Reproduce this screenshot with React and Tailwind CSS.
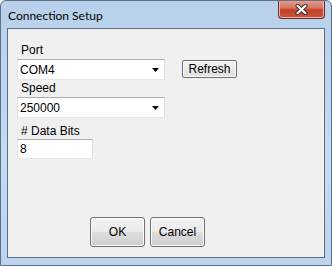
import React from 'react';

const ComboBox = ({ value }) => (
  <div className="relative w-[148px] h-[21px] bg-white border border-[#abadb3] border-b-[#e3e9ef] border-l-[#e2e3ea] border-r-[#dbdfe6] flex items-center pl-[2px]">
    <span className="text-[12px] leading-none text-black">{value}</span>
    <svg className="absolute right-[4px] top-[8px]" width="8" height="4" viewBox="0 0 8 4">
      <path d="M0 0 H7 L3.5 4 Z" fill="#000" />
    </svg>
  </div>
);

const Label = ({ children, className = '' }) => (
  <div className={`h-[15px] pl-[4px] text-[12px] leading-[15px] text-black ${className}`}>{children}</div>
);

const DialogButton = ({ children }) => (
  <button className="w-[55px] h-[30px] rounded-[3px] border border-[#707070] p-0 bg-[linear-gradient(to_bottom,#f2f2f2_0%,#ebebeb_50%,#dddddd_50%,#cfcfcf_100%)] shadow-[inset_0_0_0_1px_#fcfcfc] text-[12px] text-black">
    {children}
  </button>
);

export default function App() {
  return (
    <div
      className="w-[332px] h-[266px] overflow-hidden rounded-t-[6px] border border-[#5b6f88] bg-[linear-gradient(to_bottom,#b8d0ea,#c4daf1_60%,#bcd4ee)] px-[6px] pb-[6px] relative"
      style={{ fontFamily: '"Liberation Sans", Arial, sans-serif' }}
    >
      {/* title bar */}
      <div className="h-[27px] flex items-center pl-[1px] pt-[2px]">
        <span className="text-[12px] text-black" style={{ fontFamily: 'Lato, "Noto Sans", sans-serif' }}>
          Connection Setup
        </span>
      </div>
      <div className="absolute right-[6px] top-[-1px] w-[47px] h-[19px] rounded-b-[4px] border border-[#6b2a22] border-t-0 bg-[linear-gradient(to_bottom,#e8a493,#d66f5c_45%,#c2402c_55%,#c8553e)] shadow-[inset_0_0_0_1px_#f0b5a8] flex items-center justify-center">
        <svg width="13" height="11" viewBox="0 0 13 11">
          <path d="M2.5 1.8 L10.5 9.2 M10.5 1.8 L2.5 9.2" stroke="#3a2a2a" strokeWidth="4" strokeLinecap="round" />
          <path d="M2.5 1.8 L10.5 9.2 M10.5 1.8 L2.5 9.2" stroke="#ffffff" strokeWidth="2.2" strokeLinecap="round" />
        </svg>
      </div>

      {/* client area */}
      <div className="h-[230px] border border-[#5d6e82] bg-[#f0f0f0] pl-[9px]">
        <Label className="mt-[14px]">Port</Label>
        <div className="mt-[1px] flex items-start">
          <ComboBox value="COM4" />
          <button className="ml-[17px] mt-[1px] w-[55px] h-[18px] rounded-[2px] border border-[#707070] p-0 bg-[linear-gradient(to_bottom,#f2f2f2,#e0e0e0)] shadow-[inset_0_0_0_1px_#fafafa] text-[12px] leading-none text-black">
            Refresh
          </button>
        </div>
        <Label className="mt-[1px]">Speed</Label>
        <div className="mt-[1px]">
          <ComboBox value="250000" />
        </div>
        <Label className="mt-[6px]"># Data Bits</Label>
        <div className="w-[76px] h-[20px] bg-white border border-[#abadb3] border-b-[#e3e9ef] border-l-[#e2e3ea] border-r-[#dbdfe6] flex items-center pl-[2px]">
          <span className="text-[12px] leading-none text-black">8</span>
        </div>
        <div className="mt-[58px] ml-[73px] flex gap-[5px]">
          <DialogButton>OK</DialogButton>
          <DialogButton>Cancel</DialogButton>
        </div>
      </div>
    </div>
  );
}
